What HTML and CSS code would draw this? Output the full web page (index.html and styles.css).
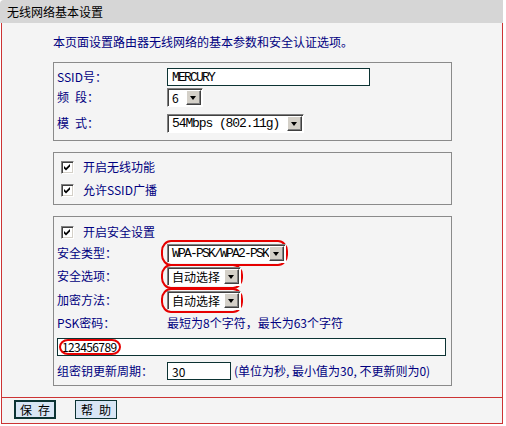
FILE: index.html
```html
<!DOCTYPE html>
<html lang="zh-CN">
<head>
  <meta charset="UTF-8">
  <meta name="viewport" content="width=device-width, initial-scale=1.0">
  <title>无线网络基本设置</title>
  <link rel="stylesheet" href="styles.css">
</head>
<body>
  <div class="title">无线网络基本设置</div>
  <div class="panel">
    <div class="content">
      <p class="intro">本页面设置路由器无线网络的基本参数和安全认证选项。</p>

      <div class="group group-basic">
        <label>SSID号：</label>
        <input class="text ssid mono" type="text" value="MERCURY">
        <label>频&ensp;段：</label>
        <span class="sel sel-channel"><span class="val">6</span><span class="arrow"></span></span>
        <label>模&ensp;式：</label>
        <span class="sel sel-mode"><span class="val mono mono-wide">54Mbps (802.11g)</span><span class="arrow"></span></span>
      </div>

      <div class="group group-switch">
        <div class="check">
          <span class="cb"><svg viewBox="0 0 11 11"><polygon points="2,4 4,6 8,2 8,4.5 4,8.5 2,6.5"/></svg></span>
          开启无线功能
        </div>
        <div class="check">
          <span class="cb"><svg viewBox="0 0 11 11"><polygon points="2,4 4,6 8,2 8,4.5 4,8.5 2,6.5"/></svg></span>
          允许SSID广播
        </div>
      </div>

      <div class="group group-security">
        <div class="check">
          <span class="cb"><svg viewBox="0 0 11 11"><polygon points="2,4 4,6 8,2 8,4.5 4,8.5 2,6.5"/></svg></span>
          开启安全设置
        </div>
        <label>安全类型：</label>
        <span class="mark"><span class="sel sel-wpa"><span class="val mono">WPA-PSK/WPA2-PSK</span><span class="arrow"></span></span></span>
        <label>安全选项：</label>
        <span class="mark"><span class="sel sel-auto"><span class="val">自动选择</span><span class="arrow"></span></span></span>
        <label>加密方法：</label>
        <span class="mark"><span class="sel sel-auto"><span class="val">自动选择</span><span class="arrow"></span></span></span>
        <label>PSK密码：</label>
        <span class="hint">最短为8个字符，最长为63个字符</span>
        <div class="psk">
          <input class="text psk-input" type="text" value="123456789">
          <span class="psk-mark"></span>
        </div>
        <label>组密钥更新周期：</label>
        <div class="period">
          <input class="text period-input" type="text" value="30">
          <span class="unit">(单位为秒, 最小值为30, 不更新则为0)</span>
        </div>
      </div>
    </div>

    <div class="actions">
      <button class="btn btn-default">保&ensp;存</button>
      <button class="btn">帮&ensp;助</button>
    </div>
  </div>
</body>
</html>
```

FILE: styles.css
```css
* {
  box-sizing: border-box;
}

body {
  margin: 0;
  width: 503px;
  background: #fff;
  font-family: "Noto Sans CJK SC", sans-serif;
  font-size: 12px;
  line-height: 18px;
  color: #000080;
}

.title {
  height: 23px;
  padding-left: 7px;
  line-height: 23px;
  background: #d6d6d6;
  color: #000;
  border-radius: 4px 0 0 0;
}

.panel {
  margin-left: 1px;
  height: 401px;
  background: #f4f4f4;
  border: 1px solid #cc3333;
  border-top: none;
}

.content {
  height: 374px;
  padding: 10px 0 0 51px;
}

.intro {
  margin: 0;
  height: 18px;
}

/* groups */
.group {
  display: grid;
  grid-template-columns: 110px 1fr;
  align-items: center;
  justify-items: start;
  width: 399px;
  margin-top: 11px;
  padding: 5px 6px 0 3px;
  border: 1px solid #8a8a8a;
}

.group-basic {
  grid-template-rows: 18px 22px 30px;
  padding-bottom: 2px;
}

.group-switch {
  grid-template-rows: 18px 18px;
  row-gap: 5px;
  padding-bottom: 5px;
}

.group-security {
  grid-template-rows: 20px 22px 24px 24px 22px 25px 24px;
  padding-bottom: 2px;
}

label {
  white-space: nowrap;
}

.check {
  grid-column: 1 / -1;
  display: flex;
  align-items: center;
  padding-left: 4px;
}

.cb {
  display: inline-block;
  width: 13px;
  height: 13px;
  margin-right: 9px;
  background: #fff;
  border: 1px solid;
  border-color: #808080 #fff #fff #808080;
  box-shadow: inset 1px 1px 0 #404040, inset -1px -1px 0 #d4d0c8;
}

.cb svg {
  display: block;
  width: 11px;
  height: 11px;
  fill: #000;
}

/* text inputs */
.text {
  height: 18px;
  margin: 0;
  padding: 0 0 0 4px;
  border: 1px solid #0c3333;
  background: #fff;
  color: #000;
  font-family: "Noto Sans CJK SC", sans-serif;
  font-size: 12px;
  outline: none;
}

.mono {
  font-family: "Liberation Mono", monospace;
  font-size: 13px;
  letter-spacing: -1.8px;
}

.mono-wide {
  letter-spacing: -1.1px;
}

.ssid {
  width: 203px;
}

/* classic drop-down */
.sel {
  display: inline-flex;
  align-items: center;
  height: 19px;
  padding: 1px 1px 1px 4px;
  background: #fff;
  color: #000;
  border: 1px solid;
  border-color: #808080 #fff #fff #808080;
  box-shadow: inset 1px 1px 0 #404040;
  white-space: nowrap;
}

.sel .val {
  flex: 1;
  line-height: 15px;
}

.arrow {
  position: relative;
  width: 15px;
  height: 15px;
  background: #d4d0c8;
  border: 1px solid;
  border-color: #fff #404040 #404040 #fff;
  box-shadow: inset -1px -1px 0 #808080;
}

.arrow::after {
  content: "";
  position: absolute;
  left: 3px;
  top: 5px;
  border-top: 4px solid #000;
  border-left: 3.5px solid transparent;
  border-right: 3.5px solid transparent;
}

.sel-channel {
  width: 36px;
}

.sel-mode {
  width: 137px;
}

.sel-wpa {
  width: 119px;
}

.sel-auto {
  width: 74px;
}

/* red marks drawn around values */
.mark {
  display: inline-block;
  margin: -3px -2px -3px -6px;
  padding: 1px 0 1px 4px;
  border: 2px solid #e60000;
  border-radius: 10px / 11px;
}

.hint {
  white-space: nowrap;
}

.psk {
  grid-column: 1 / -1;
  position: relative;
  width: 389px;
}

.psk-input {
  display: block;
  width: 100%;
  letter-spacing: -0.6px;
}

.psk-mark {
  position: absolute;
  left: 2px;
  top: 1px;
  width: 62px;
  height: 16px;
  border: 2px solid #e60000;
  border-radius: 9px / 8px;
}

.period {
  display: flex;
  align-items: center;
  white-space: nowrap;
}

.period-input {
  width: 64px;
}

.unit {
  margin-left: 3px;
}

/* bottom buttons */
.actions {
  display: flex;
  gap: 19px;
  height: 26px;
  padding: 2px 0 0 12px;
  border-top: 1px solid #cc3333;
}

.btn {
  width: 42px;
  height: 19px;
  padding: 0;
  background: #d9e6f5;
  border: 1px solid #0c3333;
  color: #000;
  font-family: "Noto Sans CJK SC", sans-serif;
  font-size: 12px;
  line-height: 16px;
}

.btn-default {
  border-width: 2px;
}
```
